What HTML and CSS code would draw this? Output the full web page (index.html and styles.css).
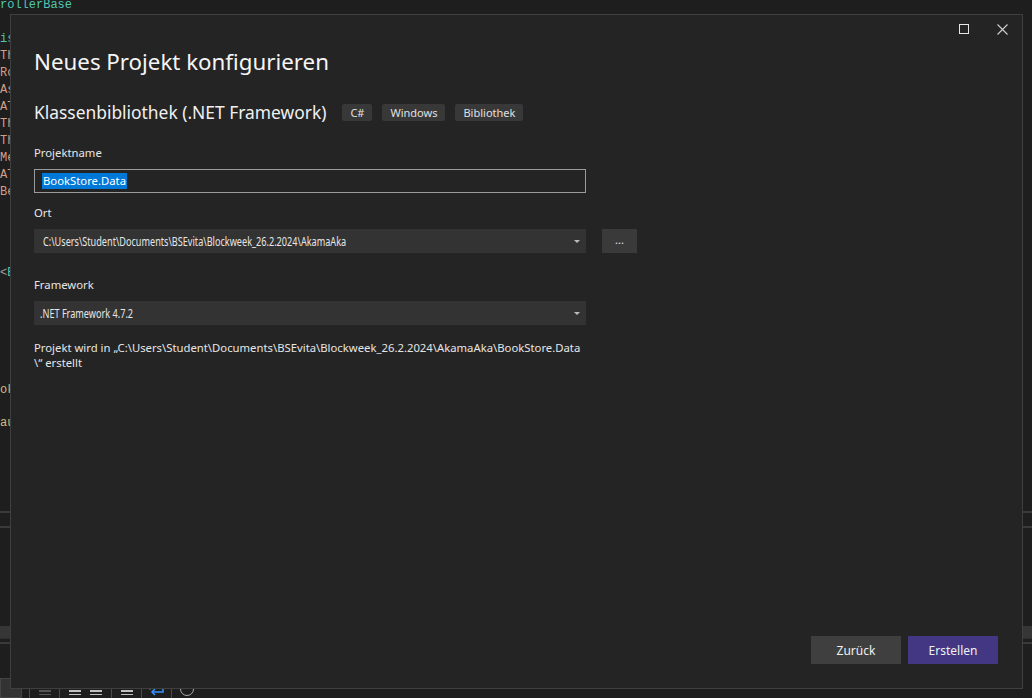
FILE: index.html
```html
<!DOCTYPE html>
<html lang="de">
<head>
<meta charset="utf-8">
<title>Neues Projekt konfigurieren</title>
<link rel="stylesheet" href="styles.css">
</head>
<body>
<div class="ide">
  <div class="code">
    <div class="ln teal">rollerBase</div>
    <div class="ln"></div>
    <div class="ln teal">ist</div>
    <div class="ln str">This</div>
    <div class="ln str">Route</div>
    <div class="ln str">Assert</div>
    <div class="ln str">ATTR</div>
    <div class="ln str">The</div>
    <div class="ln str">This</div>
    <div class="ln str">Meta</div>
    <div class="ln str">ATTR</div>
    <div class="ln str">Be</div>
    <div class="gap g1"></div>
    <div class="ln"><span class="punc">&lt;</span><span class="teal">Book</span></div>
    <div class="gap g2"></div>
    <div class="ln yel">ok</div>
    <div class="gap g3"></div>
    <div class="ln yel">au</div>
  </div>
  <div class="split"></div>
  <div class="panel"></div>
  <div class="band"></div>
  <div class="thin"></div>
  <div class="panel2"></div>
  <div class="statusbar">
    <div class="corner"></div>
    <div class="tb first"><span class="bar b1"></span></div>
    <div class="tb wide"><span class="bar b2"></span><span class="bar b2"></span></div>
    <div class="tb"><span class="bar b2"></span></div>
    <div class="tb">
      <svg width="16" height="10" viewBox="0 0 16 10"><path d="M14 1 V5 H4" fill="none" stroke="#3794ff" stroke-width="1.5"/><path d="M6 2 L3 5 L6 8" fill="none" stroke="#3794ff" stroke-width="1.5"/><path d="M1 1 V3" stroke="#888" stroke-width="1"/></svg>
    </div>
    <div class="tb"><span class="ring"></span></div>
  </div>
</div>

<div class="dialog">
  <div class="titlebar">
    <button class="winbtn" aria-label="Maximieren">
      <svg width="10" height="10" viewBox="0 0 10 10"><rect x="0.5" y="0.5" width="9" height="9" fill="none" stroke="#e6e6e6" stroke-width="1"/></svg>
    </button>
    <button class="winbtn close" aria-label="Schließen">
      <svg width="11" height="11" viewBox="0 0 11 11"><path d="M0.5 0.5 L10.5 10.5 M10.5 0.5 L0.5 10.5" stroke="#d0d0d0" stroke-width="1.1"/></svg>
    </button>
  </div>
  <div class="content">
    <h1 class="title">Neues Projekt konfigurieren</h1>
    <div class="subrow">
      <h2 class="subtitle">Klassenbibliothek (.NET Framework)</h2>
      <div class="tags">
        <span class="tag">C#</span>
        <span class="tag">Windows</span>
        <span class="tag">Bibliothek</span>
      </div>
    </div>

    <label class="label first">Projektname</label>
    <div class="textbox"><span class="sel">BookStore.Data</span></div>

    <label class="label">Ort</label>
    <div class="row">
      <div class="combo"><span class="val">C:\Users\Student\Documents\BSEvita\Blockweek_26.2.2024\AkamaAka</span><span class="caret"></span></div>
      <button class="browse">...</button>
    </div>

    <label class="label fw">Framework</label>
    <div class="combo narrow"><span class="val">.NET Framework 4.7.2</span><span class="caret"></span></div>

    <p class="info">Projekt wird in „C:\Users\Student\Documents\BSEvita\Blockweek_26.2.2024\AkamaAka\BookStore.Data<br>\“ erstellt</p>

    <div class="footer">
      <button class="btn">Zurück</button>
      <button class="btn primary">Erstellen</button>
    </div>
  </div>
</div>
</body>
</html>
```
FILE: styles.css
```css
* { box-sizing: border-box; }
html, body { margin: 0; padding: 0; }
body {
  width: 1032px;
  height: 698px;
  overflow: hidden;
  background: #1e1e1e;
  position: relative;
  font-family: "Noto Sans", "Open Sans", sans-serif;
}

/* background IDE */
.ide { display: flex; flex-direction: column; height: 698px; }
.code {
  height: 514px;
  font: 12px/17px "Liberation Mono", "DejaVu Sans Mono", monospace;
  margin-top: -3px;
  flex: none;
  overflow: hidden;
}
.ln { height: 17px; white-space: pre; color: #d4d4d4; }
.teal { color: #4ec9b0; }
.str { color: #d69d85; }
.yel { color: #d7ba7d; }
.punc { color: #a0a0a0; }
.gap.g1 { height: 64px; }
.gap.g2 { height: 100px; }
.gap.g3 { height: 16px; }
.split { height: 17px; border-top: 2px solid #3a3a3a; border-bottom: 2px solid #3a3a3a; flex: none; }
.panel { height: 98px; flex: none; }
.band { height: 12px; background: #363636; flex: none; }
.thin { height: 6px; border-top: 1px solid #2e2e2e; border-bottom: 2px solid #3a3a3a; flex: none; }
.panel2 { height: 32px; flex: none; }
.statusbar { flex: 1; display: flex; align-items: flex-end; }
.corner { width: 22px; height: 20px; background: #333; border: 1px solid #444; align-self: flex-end; }
.tb { display: flex; gap: 9px; align-items: center; justify-content: center; height: 12px; border-left: 1px solid #4a4a4a; width: 30px; flex: none; }
.tb.first { margin-left: 7px; }
.tb.wide { width: 52px; }
.bar { display: block; width: 12px; height: 5px; border-top: 2px solid #c0c0c0; border-bottom: 1px solid #c0c0c0; }
.bar.b1 { border-color: #555; }
.ring { width: 14px; height: 14px; border: 1px solid #aaa; border-radius: 50%; margin-top: -6px; }

/* dialog */
.dialog {
  position: absolute;
  left: 10px;
  top: 14px;
  width: 1013px;
  height: 675px;
  background: #242424;
  border: 1px solid #3f3f3f;
  display: flex;
  flex-direction: column;
  color: #e8e8e8;
}
.titlebar { height: 28px; display: flex; justify-content: flex-end; align-items: center; flex: none; padding-right: 2px; }
.winbtn {
  background: none; border: 0; padding: 0; margin: 0;
  width: 40px; height: 28px;
  display: flex; align-items: center; justify-content: center;
}
.winbtn.close { width: 36px; }
.content { flex: 1; display: flex; flex-direction: column; padding: 0 0 24px 23px; }
.title {
  margin: 3px 0 0;
  font-size: 22.3px;
  line-height: 32px;
  font-weight: 400;
  color: #f5f5f5;
}
.subrow { display: flex; align-items: center; margin-top: 19px; height: 30px; }
.subtitle { margin: 0; font-size: 17.4px; font-weight: 400; line-height: 24px; color: #f0f0f0; }
.tags { display: flex; gap: 10px; margin-left: 16px; }
.tag {
  background: #383838;
  color: #e0e0e0;
  font-size: 11px;
  line-height: 17px;
  height: 17px;
  padding: 0 8px;
  border-radius: 2px;
}
.label { display: block; font-size: 11.3px; line-height: 16px; color: #e6e6e6; margin-top: 12px; }
.label.first { margin-top: 18px; }
.label.fw { margin-top: 24px; }
.textbox {
  margin-top: 8px;
  width: 552px;
  height: 24px;
  border: 1px solid #9a9a9a;
  background: #242424;
  padding: 3px 0 0 7px;
  font-size: 11.3px;
  line-height: 15px;
}
.sel { background: #0078d7; color: #fff; padding: 0 1px; display: inline-block; height: 16px; line-height: 16px; }
.row { display: flex; gap: 16px; margin-top: 8px; }
.combo {
  width: 552px;
  height: 24px;
  background: #333333;
  display: flex;
  align-items: center;
  justify-content: space-between;
  padding: 0 6px 0 9px;
  font-size: 12px;
  color: #e6e6e6;
}
.combo .val { display: inline-block; transform: scaleX(0.76); transform-origin: left center; white-space: nowrap; }
.combo.narrow { margin-top: 8px; padding-left: 6px; }
.caret { width: 0; height: 0; border-left: 3px solid transparent; border-right: 3px solid transparent; border-top: 3px solid #bdbdbd; }
.browse {
  width: 35px; height: 24px;
  background: #3a3a3a; border: 0; color: #e6e6e6;
  font-family: inherit; font-size: 11px; padding: 0 0 4px;
}
.info { margin: 15px 0 0; font-size: 11.3px; line-height: 15px; color: #e6e6e6; }
.footer { margin-top: auto; display: flex; justify-content: flex-end; gap: 7px; padding-right: 24px; }
.btn {
  width: 90px; height: 28px;
  border: 0; background: #3f3f3f; color: #f0f0f0;
  font-family: inherit; font-size: 12px;
}
.btn.primary { background: #433783; }
```
